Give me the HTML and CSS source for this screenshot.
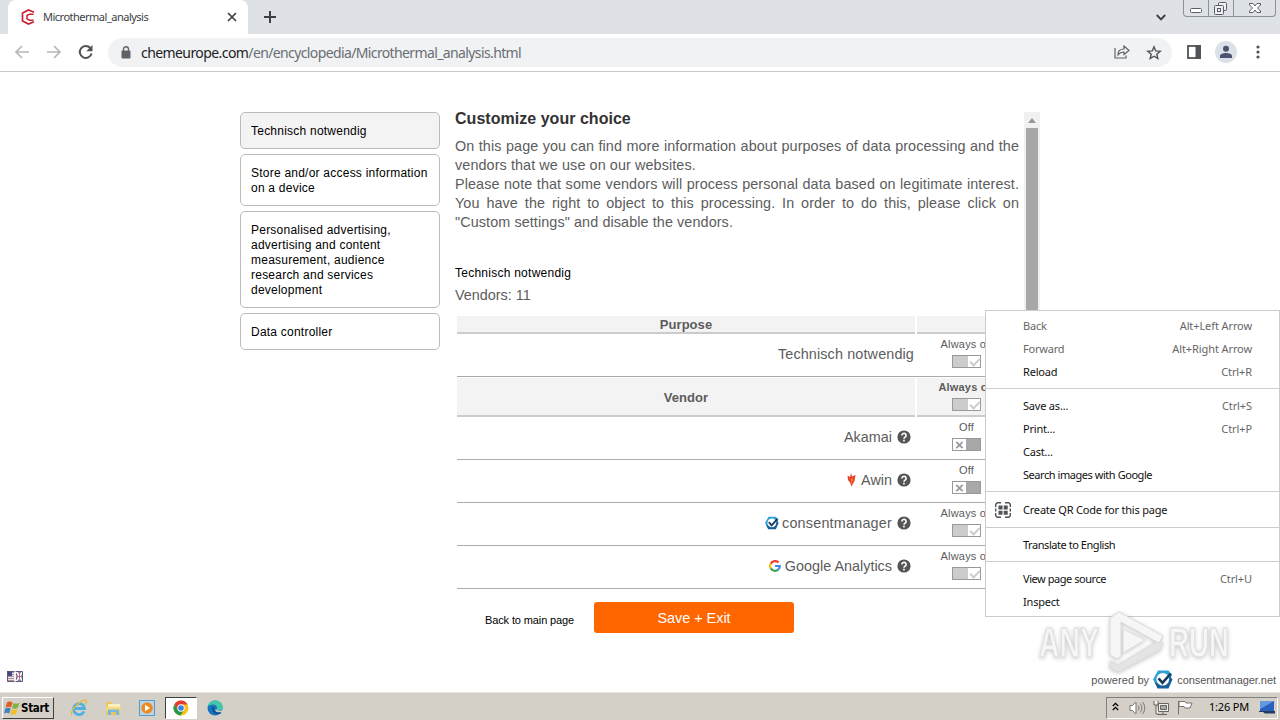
FILE: index.html
```html
<!DOCTYPE html>
<html lang="en">
<head>
  <meta charset="UTF-8">
  <title>Microthermal_analysis</title>
  <link rel="stylesheet" href="styles.css">
</head>
<body>
  <svg class="defs" width="0" height="0">
    <symbol id="help" viewBox="0 0 14 14">
      <circle cx="7" cy="7" r="6.6" fill="#555"/>
      <path d="M4.9 5.4a2.1 2 0 1 1 3.3 1.6C7.4 7.5 7 7.7 7 8.7" fill="none" stroke="#fff" stroke-width="1.6"/>
      <rect x="6.1" y="9.7" width="1.7" height="1.7" fill="#fff"/>
    </symbol>
    <symbol id="cm" viewBox="0 0 20 19">
      <path d="M5 .5h10.500L19 5l-2 4.500L4.500 17 0 9.500z" fill="#2f9fd8"/>
      <path d="M1.500 12l3 6.500h11L19.500 9.500 17 6l-3 7-5 2z" fill="#14609c"/>
      <circle cx="9.800" cy="9.300" r="6.300" fill="#fff"/>
      <path d="M5.500 8.300l4 4.500L17.800 3.500" fill="none" stroke="#173a5c" stroke-width="2.600"/>
    </symbol>
  </svg>

  <div class="tab-strip">
    <div class="tab">
      <svg class="favicon" width="14" height="16" viewBox="0 0 14 16" fill="none" stroke="#c9202e" stroke-width="1.700">
        <path d="M13 3.200L7.500 1 1.500 4v8l6 3 5.500-2.200"/>
        <path d="M12.500 5.200H8.500L6 6.500v3.400l2.500 1.300h4" stroke-width="1.500"/>
      </svg>
      <span class="tab-title">Microthermal_analysis</span>
      <svg class="tab-close" width="10" height="10" viewBox="0 0 10 10" stroke="#3c4043" stroke-width="1.700"><path d="M1 1l8 8M9 1L1 9"/></svg>
    </div>
    <svg class="new-tab" width="12" height="12" viewBox="0 0 12 12" stroke="#3c4043" stroke-width="2"><path d="M6 0v12M0 6h12"/></svg>
    <svg class="tab-search" width="10" height="7" viewBox="0 0 10 7" fill="none" stroke="#3c4043" stroke-width="1.900"><path d="M.8 1L5 5.300 9.200 1"/></svg>
    <div class="window-buttons">
      <span class="wb"><svg width="25" height="16" viewBox="0 0 25 16"><rect x="6.500" y="8.500" width="11" height="4" rx="1" fill="#fff" stroke="#585d68"/></svg></span>
      <span class="wb"><svg width="25" height="16" viewBox="0 0 25 16" fill="#eef0f4" stroke="#585d68"><rect x="9.500" y="2.500" width="8" height="8" rx="1"/><rect x="5.500" y="5.500" width="9" height="9" rx="1"/><rect x="8.500" y="8.500" width="3" height="3"/></svg></span>
      <span class="wb wide"><svg width="42" height="16" viewBox="0 0 42 16"><path d="M15.500 3.500h3.500l2 2.500 2-2.500h3.500v1.500L23.500 8l3 3v1.500H23l-2-2.500-2 2.500h-3.500V11l3-3-3-3z" fill="#fff" stroke="#585d68"/></svg></span>
    </div>
  </div>

  <div class="toolbar">
    <svg class="nav" width="16" height="14" viewBox="0 0 16 14" fill="none" stroke="#b5b7ba" stroke-width="1.700"><path d="M15 7H2M8 1L2 7l6 6"/></svg>
    <svg class="nav" width="16" height="14" viewBox="0 0 16 14" fill="none" stroke="#b5b7ba" stroke-width="1.700"><path d="M1 7h13M8 1l6 6-6 6"/></svg>
    <svg class="nav" width="16" height="16" viewBox="0 0 16 16"><path d="M13.600 9.500A6 6 0 1 1 12.300 4" fill="none" stroke="#505357" stroke-width="2"/><path d="M14.500 1v6.200H8.300z" fill="#505357"/></svg>
    <div class="address">
      <svg class="lock" width="10" height="13" viewBox="0 0 10 13"><rect x="0.500" y="4.500" width="9" height="8" rx="1" fill="#5f6368"/><path d="M2.500 5V3.300a2.500 2.500 0 0 1 5 0V5" fill="none" stroke="#5f6368" stroke-width="1.400"/></svg>
      <span class="host">chemeurope.com</span><span class="path">/en/encyclopedia/Microthermal_analysis.html</span>
      <svg class="share" width="16" height="14" viewBox="0 0 16 14" fill="none" stroke="#5f6368" stroke-width="1.200"><path d="M1 3v10h11v-2.500M4 10c0-4 2-6 6-6V1l5 4.500-5 4V7C7 7 5.500 8 4 10z"/></svg>
      <svg width="16" height="15" viewBox="0 0 16 15"><path d="M8 1.800l1.700 4.100 4.500.4-3.400 2.900 1 4.300L8 11.200l-3.800 2.300 1-4.300-3.400-2.900 4.500-.4z" fill="none" stroke="#505357" stroke-width="1.400"/></svg>
    </div>
    <svg class="panel-icon" width="14" height="14" viewBox="0 0 14 14"><rect x="1" y="1" width="12" height="12" fill="#fff" stroke="#505357" stroke-width="1.800"/><rect x="8.500" y="0" width="5.500" height="14" fill="#505357"/></svg>
    <span class="avatar"><svg width="14" height="14" viewBox="0 0 14 14" fill="#4a5370"><circle cx="7" cy="3.800" r="3"/><path d="M1 13v-2c0-2 3-3 6-3s6 1 6 3v2z"/></svg></span>
    <svg class="dots" width="4" height="14" viewBox="0 0 4 14" fill="#505357"><circle cx="2" cy="2" r="1.600"/><circle cx="2" cy="7" r="1.600"/><circle cx="2" cy="12" r="1.600"/></svg>
  </div>

  <main class="page">
    <div class="consent">
      <nav class="purposes">
        <div class="purpose active">Technisch notwendig</div>
        <div class="purpose">Store and/or access information on a device</div>
        <div class="purpose">Personalised advertising, advertising and content measurement, audience research and services development</div>
        <div class="purpose">Data controller</div>
      </nav>
      <section class="details">
        <h1>Customize your choice</h1>
        <p class="intro">On this page you can find more information about purposes of data processing and the vendors that we use on our websites.<br>Please note that some vendors will process personal data based on legitimate interest. You have the right to object to this processing. In order to do this, please click on "Custom settings" and disable the vendors.</p>
        <h2>Technisch notwendig</h2>
        <div class="count">Vendors: 11</div>
        <div class="table">
          <div class="row head">
            <div class="cell name">Purpose</div>
            <div class="cell state"></div>
          </div>
          <div class="row first">
            <div class="cell name">Technisch notwendig</div>
            <div class="cell state"><span>Always on</span><i class="toggle on"></i></div>
          </div>
          <div class="row head tall">
            <div class="cell name">Vendor</div>
            <div class="cell state"><span>Always on</span><i class="toggle on"></i></div>
          </div>
          <div class="row">
            <div class="cell name vendor"><span>Akamai</span><svg class="help"><use href="#help"/></svg></div>
            <div class="cell state"><span>Off</span><i class="toggle off"></i></div>
          </div>
          <div class="row">
            <div class="cell name vendor"><svg class="awin" width="9" height="14" viewBox="0 0 9 14"><path d="M4 0l1 3.500 3.500-1.500L7.500 8 4.500 13.500 3 9.500 1 7 .5 2.500 3 4z" fill="#e8432a"/><path d="M4 5l.5 7L6 6z" fill="#f58433"/></svg><span>Awin</span><svg class="help"><use href="#help"/></svg></div>
            <div class="cell state"><span>Off</span><i class="toggle off"></i></div>
          </div>
          <div class="row">
            <div class="cell name vendor"><svg class="logo"><use href="#cm"/></svg><span class="cm-name">consentmanager</span><svg class="help"><use href="#help"/></svg></div>
            <div class="cell state"><span>Always on</span><i class="toggle on"></i></div>
          </div>
          <div class="row">
            <div class="cell name vendor"><svg class="google" width="12" height="12" viewBox="0 0 12 12" fill="none" stroke-width="2.200"><path d="M9.600 2.600A4.900 4.900 0 0 0 1.700 3.700" stroke="#ea4335"/><path d="M1.700 3.700a4.900 4.900 0 0 0 0 4.600" stroke="#fbbc05"/><path d="M1.700 8.300a4.900 4.900 0 0 0 7.500 1.300" stroke="#34a853"/><path d="M9.200 9.600A4.900 4.900 0 0 0 10.800 6H6" stroke="#4285f4"/></svg><span class="ga-name">Google Analytics</span><svg class="help"><use href="#help"/></svg></div>
            <div class="cell state"><span>Always on</span><i class="toggle on"></i></div>
          </div>
        </div>
      </section>
      <div class="scrollbar"><span class="arrow"></span><span class="thumb"></span></div>
    </div>
    <div class="actions">
      <span class="back">Back to main page</span>
      <button class="save">Save + Exit</button>
    </div>
    <div class="page-foot">
      <svg class="flag" width="16" height="11" viewBox="0 0 16 11"><rect width="16" height="11" fill="#e6e3ea"/><path d="M0 5.500h7M0 7.500h7M0 9.500h7M4 1.500h3M4 3.500h3" stroke="#b98a9c"/><rect width="5" height="5" fill="#414c7d"/><rect x="9" y="0" width="7" height="11" fill="#56618f"/><path d="M9 0l7 11M16 0L9 11M9 5.500h7M12.500 0v11" stroke="#fff" stroke-width="1.500"/><path d="M9 5.500h7M12.500 0v11" stroke="#b5495c" stroke-width=".8"/><path d="M.5.500h15v10H.5z" fill="none" stroke="#555a76"/><path d="M8 0v11" stroke="#fff"/></svg>
      <div class="powered"><span>powered by</span><svg class="cm-big"><use href="#cm"/></svg><span class="cm-net">consentmanager.net</span></div>
    </div>
  </main>

  <div class="context-menu">
    <div class="item disabled"><span>Back</span><kbd>Alt+Left Arrow</kbd></div>
    <div class="item disabled"><span>Forward</span><kbd>Alt+Right Arrow</kbd></div>
    <div class="item"><span>Reload</span><kbd>Ctrl+R</kbd></div>
    <hr>
    <div class="item"><span>Save as...</span><kbd>Ctrl+S</kbd></div>
    <div class="item"><span>Print...</span><kbd>Ctrl+P</kbd></div>
    <div class="item"><span>Cast...</span></div>
    <div class="item"><span class="tight">Search images with Google</span></div>
    <hr>
    <div class="item qr">
      <svg width="16" height="16" viewBox="0 0 16 16"><path d="M.7 5V2.200L2.200.7H6M10 .7h3.800l1.500 1.500V5M15.300 11v2.800l-1.500 1.500H10M6 15.300H2.200L.7 13.800V11M.7 6.500v3M15.300 6.500v3" fill="none" stroke="#505357" stroke-width="1.400"/><path d="M3.500 3.500h4v4h-4zM8.700 3.500h4v4h-4zM3.500 8.700h4v4h-4zM8.700 8.700h4v4h-4z" fill="#505357"/></svg>
      <span>Create QR Code for this page</span>
    </div>
    <hr>
    <div class="item"><span class="tight">Translate to English</span></div>
    <hr>
    <div class="item"><span class="tight">View page source</span><kbd>Ctrl+U</kbd></div>
    <div class="item"><span>Inspect</span></div>
  </div>

  <svg class="watermark" width="204" height="70" viewBox="0 0 204 70">
    <g class="mark">
      <text x="5" y="49" textLength="60" lengthAdjust="spacingAndGlyphs">ANY</text>
      <text x="135" y="49" textLength="60" lengthAdjust="spacingAndGlyphs">RUN</text>
      <path class="shade" d="M76 53l8 4 38-23 7 1-3 7-42 22-8-4z"/>
      <path d="M76 10l9-6 44 24-4 7-38-21v34l-4 3-7-4z"/>
      <path d="M89 21l22 11-22 13z"/>
    </g>
  </svg>

  <footer class="taskbar">
    <div class="start">
      <svg width="17" height="16" viewBox="0 0 17 16"><path d="M3 2.500C5 1 7 1.500 8.500 2.500L7 7.500C5.500 6.500 3.500 6.500 1.500 7.500z" fill="#e35a26"/><path d="M9.500 3c2 1 4 1 6-.5L14 7.500c-2 1.500-4 1.500-6 .5z" fill="#7fb241"/><path d="M1.200 8.500c2-1.200 4-1 5.500 0l-1.500 5c-1.700-1-3.500-1-5.200 0z" fill="#3f84c5"/><path d="M7.700 9c2 1 4 1 6-.3l-1.500 5c-2 1.300-4 1.300-6 .3z" fill="#f3bd2c"/></svg>
      <span>Start</span>
    </div>
    <div class="launch">
      <span class="app"><svg width="18" height="18" viewBox="0 0 18 18" fill="none"><path d="M14 12.500A5.500 5.500 0 1 1 14.500 9.500H5" stroke="#4eb1e4" stroke-width="2.800"/><path d="M2 16C-1 11 13-1 16 1.500c1 1-.5 3-1 4" stroke="#e5b83d" stroke-width="1.300"/></svg></span>
      <span class="app"><svg width="17" height="16" viewBox="0 0 17 16"><path d="M1 2h6l1 2h7v11H1z" fill="#e9c760"/><path d="M3 4h12v5H3z" fill="#f8efbd"/><path d="M1 7h15v4H1z" fill="#f3d97f"/><path d="M3 15V9.500h11V15h-3v-3H6v3z" fill="#75b9dc"/></svg></span>
      <span class="app"><svg width="16" height="16" viewBox="0 0 16 16"><rect x=".5" y=".5" width="15" height="15" fill="#b5d7ee" stroke="#5b9ac7"/><circle cx="8" cy="8" r="5.800" fill="#f08a1d"/><path d="M6 4.800L11 8l-5 3.200z" fill="#fff"/></svg></span>
      <span class="app current"><svg width="16" height="16" viewBox="0 0 16 16"><circle cx="8" cy="8" r="7.500" fill="#fbc116"/><path d="M1.500 4.200A7.500 7.500 0 0 1 14.500 4.500H8L4.800 9.500z" fill="#e33b2e"/><path d="M1.500 4.200A7.500 7.500 0 0 0 7.500 15.500L11 10 5 10z" fill="#279847"/><circle cx="8" cy="8" r="3.700" fill="#fff"/><circle cx="8" cy="8" r="2.800" fill="#397fe6"/></svg></span>
      <span class="app"><svg width="17" height="16" viewBox="0 0 17 16"><circle cx="8" cy="8" r="7.500" fill="#1673bd"/><path d="M.7 6.500C2-1 14-2 16 6.500c.5 4-5 5-6.500 3C11 7 9 4.500 6 4.500c-2.500 0-4.500 1-5.300 2z" fill="#42c7a8"/><path d="M6.500 7c-2 5 3 7 7.500 5.500" fill="none" stroke="#0b4c8c" stroke-width="1.800"/><path d="M9.500 9.500c1 1.500 4 1.500 6 .5l-1 2c-3 .8-5.500 0-6.500-2z" fill="#d4d0c8"/></svg></span>
    </div>
    <div class="tray">
      <svg class="chev" width="7" height="9" viewBox="0 0 7 9" fill="none" stroke="#000" stroke-width="1.300"><path d="M.8 4l2.700-2.700L6.200 4M.8 8l2.700-2.700L6.200 8"/></svg>
      <svg class="sound" width="17" height="14" viewBox="0 0 17 14" fill="none" stroke="#77756f"><path d="M1 4.500h2.500L7 1v12L3.500 9.500H1z" fill="#fff"/><path d="M9 4.500c1.300 1.500 1.300 3.500 0 5M11 2.500c2.500 3 2.500 6 0 9M13.500 1c3 4 3 8 0 12"/></svg>
      <svg class="net" width="17" height="16" viewBox="0 0 17 16" fill="#eee" stroke="#67655f"><path d="M5.500 3.500h10v8h-10z"/><path d="M7.500 5.500h6v4h-6z" fill="#aaa"/><path d="M5 14.500h9M10 11.500v3"/><path d="M1 1v4h4V1M3 5v9h3"/></svg>
      <svg class="flag-icon" width="16" height="15" viewBox="0 0 16 15" fill="#fff" stroke="#77756f"><path d="M1.500 1v13.500"/><path d="M2 1.500h6l1 1.500h6l-2 5H8L7 6.500H2z"/></svg>
      <span class="clock">1:26 PM</span>
      <svg class="desktop" width="16" height="13" viewBox="0 0 16 13"><path d="M1 0h14v10H1z" fill="#2860bf"/><path d="M1 0h14L1 8z" fill="#6599df"/><path d="M0 10h16v2.500H6L4 11H0z" fill="#283b5f"/></svg>
    </div>
  </footer>
</body>
</html>
```
FILE: styles.css
```css
* {
  margin: 0;
  padding: 0;
  box-sizing: border-box;
}

body {
  width: 1280px;
  height: 720px;
  overflow: hidden;
  position: relative;
  display: flex;
  flex-direction: column;
  background: #fff;
  color: #000;
  font-family: "Liberation Sans", Arial, sans-serif;
  font-size: 12px;
}

svg {
  display: block;
  flex-shrink: 0;
}

.defs {
  position: absolute;
}

/* Browser chrome */
.tab-strip {
  height: 34px;
  flex-shrink: 0;
  display: flex;
  align-items: flex-start;
  background: #dee1e6;
  padding-left: 8px;
}

.tab {
  width: 240px;
  height: 34px;
  display: flex;
  align-items: center;
  padding: 0 11px 0 13px;
  background: #fff;
  border-radius: 8px 8px 0 0;
}

.tab-title {
  flex: 1;
  margin: -2px 0 0 8px;
  font-family: "Noto Sans", sans-serif;
  font-size: 11px;
  letter-spacing: -0.5px;
  color: #3c4043;
}

.new-tab {
  margin: 11px 0 0 16px;
}

.tab-search {
  margin: 14px 17px 0 auto;
}

.window-buttons {
  display: flex;
  width: 93px;
  height: 17px;
  margin-right: 4px;
  border: 1px solid #8c919c;
  border-top: 0;
  border-radius: 0 0 4px 4px;
}

.wb {
  width: 25px;
  border-right: 1px solid #8c919c;
}

.wb.wide {
  width: 42px;
  border-right: 0;
}

.toolbar {
  height: 38px;
  flex-shrink: 0;
  display: flex;
  align-items: center;
  padding: 0 20px 1px 14px;
  background: #fff;
  border-bottom: 1px solid #c9cacc;
}

.nav {
  margin-right: 16px;
}

.address {
  width: 1064px;
  height: 29px;
  margin-left: -2px;
  display: flex;
  align-items: center;
  padding: 0 10px 0 13px;
  border-radius: 15px;
  background: #f0f2f4;
  font-family: "Noto Sans", sans-serif;
  font-size: 14px;
}

.host {
  margin-left: 10px;
  letter-spacing: -0.58px;
  color: #202124;
}

.path {
  letter-spacing: -0.62px;
  color: #6a6e73;
}

.share {
  margin: 0 16px 0 auto;
}

.panel-icon {
  margin-left: 15px;
}

.avatar {
  width: 22px;
  height: 22px;
  margin-left: 14px;
  display: flex;
  align-items: center;
  justify-content: center;
  border-radius: 50%;
  background: #dce1e8;
}

.dots {
  margin-left: auto;
}

/* Consent page */
.page {
  flex: 1;
  display: flex;
  flex-direction: column;
  padding-top: 40px;
}

.consent {
  display: flex;
  width: 800px;
  height: 477px;
  margin: 0 auto;
}

.purposes {
  width: 200px;
  display: flex;
  flex-direction: column;
  gap: 5px;
}

.purpose {
  padding: 11px 10px 9px;
  border: 1px solid #bbb;
  border-radius: 5px;
  line-height: 15px;
  letter-spacing: 0.23px;
}

.purpose.active {
  background: #f3f3f3;
}

.details {
  width: 564px;
  margin-left: 15px;
  font-size: 14.4px;
  color: #5c5c5c;
}

h1 {
  font-size: 16px;
  line-height: 14px;
  color: #333;
  letter-spacing: 0.03px;
}

.intro {
  margin-top: 11px;
  line-height: 19px;
  letter-spacing: 0.09px;
  text-align: justify;
}

h2 {
  margin-top: 34px;
  font-size: 12px;
  line-height: 15px;
  font-weight: normal;
  letter-spacing: 0.25px;
  color: #000;
}

.count {
  margin-top: 4px;
  line-height: 20px;
}

.table {
  width: 560px;
  margin: 11px 0 0 2px;
}

.row {
  display: flex;
  height: 43px;
  border-bottom: 1px solid #aaa;
}

.cell {
  display: flex;
  align-items: center;
}

.cell.name {
  width: 458px;
  justify-content: flex-end;
  padding: 0 1px 3px 0;
}

.row.first .name {
  letter-spacing: 0.13px;
}

.cell.state {
  width: 100px;
  margin-left: 2px;
  flex-direction: column;
  padding: 4px 1px 0 0;
  font-size: 11px;
  line-height: 13px;
  letter-spacing: 0.2px;
}

.row.head {
  height: 18px;
  border-bottom: 0;
  font-weight: bold;
}

.row.head .cell {
  background: #f3f3f3;
  border-bottom: 2px solid #ccc;
}

.row.head .name {
  justify-content: center;
  padding: 0;
  font-size: 13px;
  letter-spacing: 0.05px;
}

.row.head.tall {
  height: 39px;
  margin-top: 1px;
}

.row.head.tall .name {
  padding-top: 2px;
}

.row.head.tall .state {
  padding-top: 3px;
}

.cell.vendor {
  padding: 0 4px 2px 0;
}

.help {
  width: 14px;
  height: 14px;
  margin-left: 5px;
}

.logo {
  width: 14px;
  height: 14px;
  margin-right: 3px;
}

.cm-name {
  letter-spacing: 0.2px;
}

.google {
  margin-right: 4px;
}

.awin {
  margin-right: 5px;
}

.toggle {
  width: 29px;
  height: 13px;
  margin-top: 4px;
  position: relative;
  border: 1px solid #999;
  background: linear-gradient(90deg, #ccc 15px, #fff 15px);
}

.toggle.on::after {
  content: "";
  position: absolute;
  left: 17px;
  top: 2px;
  width: 8px;
  height: 4px;
  border-left: 2px solid #ccc;
  border-bottom: 2px solid #ccc;
  transform: rotate(-45deg);
}

.toggle.off {
  background: linear-gradient(90deg, #fff 13px, #a8a8a8 13px);
}

.toggle.off::after {
  content: "×";
  position: absolute;
  left: 2px;
  top: -1px;
  font-size: 15px;
  font-weight: bold;
  font-style: normal;
  line-height: 13px;
  color: #999;
}

.scrollbar {
  width: 16px;
  margin-left: 5px;
  display: flex;
  flex-direction: column;
  align-items: center;
  background: #f1f1f1;
}

.arrow {
  margin: 6px 0 5px;
  border: 4px solid transparent;
  border-top: 0;
  border-bottom: 5px solid #999;
}

.thumb {
  width: 12px;
  height: 300px;
  background: #a8a8a8;
}

.actions {
  display: flex;
  align-items: center;
  height: 31px;
  margin: 13px 0 0 485px;
}

.back {
  width: 109px;
  padding-top: 5px;
  font-size: 11px;
  letter-spacing: -0.12px;
  white-space: nowrap;
}

.save {
  width: 200px;
  height: 31px;
  border: 0;
  border-radius: 3px;
  background: #f60;
  color: #fff;
  font-family: inherit;
  font-size: 14.4px;
}

.page-foot {
  display: flex;
  justify-content: space-between;
  margin-top: auto;
  padding: 0 4px 3px 7px;
}

.flag {
  margin-top: 1px;
}

.powered {
  display: flex;
  align-items: center;
  color: #555;
  font-size: 11px;
  letter-spacing: 0.1px;
}

.cm-big {
  width: 20px;
  height: 19px;
  margin: 0 4px;
}

.cm-net {
  letter-spacing: -0.05px;
}

/* Context menu */
.context-menu {
  position: absolute;
  left: 985px;
  top: 310px;
  width: 295px;
  height: 307px;
  padding-top: 4px;
  background: #fff;
  border: 1px solid #ccc;
  font-family: "Noto Sans", sans-serif;
  font-size: 11px;
  letter-spacing: -0.2px;
  color: #111;
}

.item {
  height: 23px;
  display: flex;
  align-items: center;
  justify-content: space-between;
  padding: 0 27px 2px 37px;
}

.item.disabled,
kbd {
  color: #666;
}

kbd {
  font: inherit;
  letter-spacing: -0.1px;
}

.tight {
  letter-spacing: -0.45px;
}

.item.qr {
  height: 25px;
  justify-content: flex-start;
  gap: 12px;
  padding-left: 9px;
}

.context-menu hr {
  height: 1px;
  margin: 4px 0 6px;
  border: 0;
  background: #ccc;
}

.watermark {
  position: absolute;
  left: 1034px;
  top: 608px;
  overflow: visible;
}

.mark {
  fill: #f6f6f6;
  stroke: #dcdcdc;
  stroke-width: 1;
  filter: drop-shadow(0 1px 2px rgba(0, 0, 0, 0.22));
  font-family: "Liberation Sans", sans-serif;
  font-size: 43px;
  font-weight: bold;
}

.shade {
  fill: #e4e4e4;
}

/* Taskbar */
.taskbar {
  height: 28px;
  flex-shrink: 0;
  display: flex;
  align-items: center;
  padding: 2px 2px 0;
  background: #d4d0c8;
  border-top: 1px solid #e9e7e3;
}

.start {
  width: 52px;
  height: 22px;
  display: flex;
  align-items: center;
  padding-left: 1px;
  border: 1px solid;
  border-color: #fff #404040 #404040 #fff;
  font-family: "DejaVu Sans Condensed", "DejaVu Sans", sans-serif;
  font-size: 11.5px;
  font-weight: bold;
  letter-spacing: -0.3px;
}

.launch {
  display: flex;
  align-items: center;
  gap: 2px;
  margin-left: 9px;
}

.app {
  width: 32px;
  height: 22px;
  display: flex;
  align-items: center;
  justify-content: center;
}

.app.current {
  background: #fff;
  border: 1px solid;
  border-color: #404040 #fff #fff #404040;
}

.tray {
  width: 172px;
  height: 22px;
  margin-left: auto;
  display: flex;
  align-items: center;
  padding-left: 5px;
  border: 1px solid;
  border-color: #808080 #fff #fff #808080;
  font-family: "Noto Sans", sans-serif;
  font-size: 11px;
}

.chev {
  margin-bottom: 2px;
}

.sound {
  margin-left: 10px;
}

.net {
  margin-left: 7px;
}

.flag-icon {
  margin-left: 7px;
}

.clock {
  margin: -2px 0 0 16px;
  letter-spacing: -0.2px;
}

.desktop {
  margin-left: auto;
  margin-right: 2px;
}
```
